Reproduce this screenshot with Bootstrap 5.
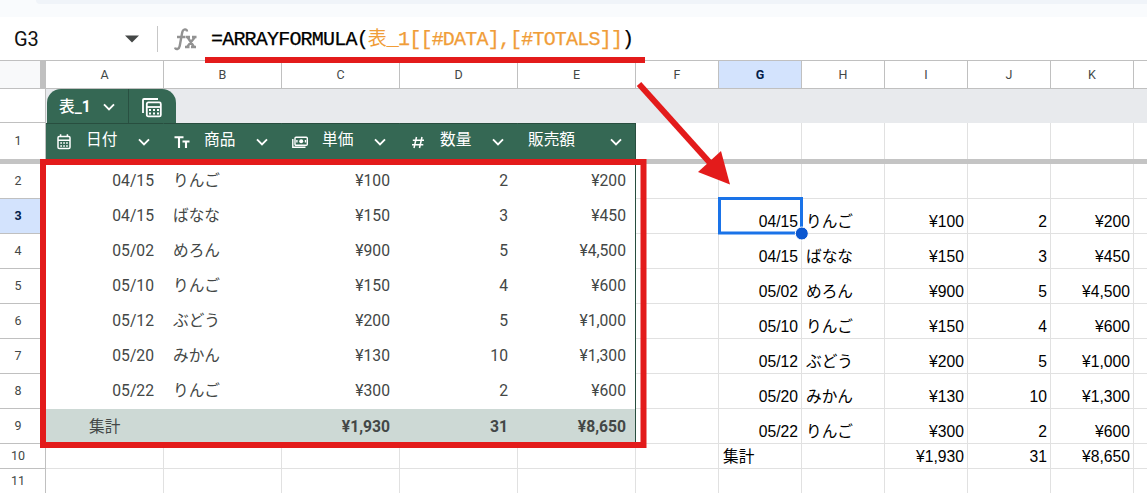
<!DOCTYPE html>
<html lang="ja">
<head>
<meta charset="utf-8">
<meta name="viewport" content="width=device-width, initial-scale=1">
<title>G3 - 表_1</title>
<link href="https://cdn.jsdelivr.net/npm/bootstrap@5.3.0/dist/css/bootstrap.min.css" rel="stylesheet">
<style>
body{font-family:Roboto,"Noto Sans CJK JP",sans-serif;font-size:15.7px;color:#434746;width:1147px;height:493px;background:#fff;line-height:20px}
svg{display:block;flex:none}
.topstrip{height:17px;background:#f9fbfd}
.toolpill{height:4px;margin-left:36px;background:#f0f4f9;border-bottom-left-radius:5px}
.fbar{height:44px;border-bottom:1px solid #c0c0c0;background:#fff}
.namebox{width:158px;height:26px;padding-left:14px;padding-right:18px;border-right:1px solid #c7c7c7;font-size:20px;color:#111}
.formula{width:936px;font-family:"Liberation Mono","Noto Sans CJK JP",monospace;font-size:20px;letter-spacing:-.8px;color:#000;white-space:pre;line-height:26px;padding-top:2px;-webkit-text-stroke:.25px}
.formula .rng{color:#f09d38}
.formula .kanji{font-size:19px;letter-spacing:0;-webkit-text-stroke:0}
.gridrow{display:flex;width:1147px}
.gc{flex:none;width:83px;height:100%;border-right:1px solid #e1e1e1;border-bottom:1px solid #e1e1e1;display:flex;white-space:nowrap}
.gc.wide{width:118px}
.gc.rest{width:13px;border-right:0}
.rh{flex:none;width:46px;padding-right:9px;font-size:12.5px;display:flex;align-items:center;justify-content:center;border-right:1px solid #c0c0c0;border-bottom:1px solid #c0c0c0}
.colhead{height:28px;font-size:12.5px}
.colhead .gc{border-color:#c0c0c0;align-items:center;justify-content:center}
.colhead .rh{background:#f8f9fa;border-right:6px solid #c0c0c0}
.picked{background:#d3e3fd!important;color:#041e49;font-weight:700}
.band{height:34px;background:#e8eaed}
.band .rh{background:#fff}
.tabchip{width:129px;height:34px;background:#356854;border-radius:14px 14px 0 0;color:#fff;margin-left:1px;font-weight:500}
.tabchip .nm{width:82px;border-right:1px solid #285041;padding:2px 13px 0 12px}
.frow{height:36px}
.frow .gc,.frow .rh{border-bottom:0}
.frow .th{background:#356854;border-color:#356854;border-top:1px solid #284e3f;color:#fff;padding:0 13px 1px 10px;align-items:center}
.th span{position:relative;top:-1px}
.th svg{margin-top:1px}
.th.last{border-right-color:#284e3f!important}
.freeze{height:5px;background:#c4c4c4}
.r35{height:35px}.r25{height:25px}
.tb{border-color:#fff;border-bottom:0;align-items:center;padding:0 9px 2px 9px}
.tb.last{border-right-color:#284e3f}
.total .tb{background:#cdd9d5;border-right-color:#cdd9d5;font-weight:700;padding-bottom:0}
.total .tb.last{border-right-color:#284e3f}
.num{justify-content:flex-end}
.out{font-family:"Liberation Sans","Noto Sans CJK JP",sans-serif;color:#000;align-items:flex-end;padding:0 3px 1px 4px}
.overlay{position:absolute;pointer-events:none}
</style>
</head>
<body class="position-relative overflow-hidden">
<div class="topstrip"><div class="toolpill"></div></div>
<div class="fbar d-flex align-items-center">
  <div class="namebox d-flex align-items-center justify-content-between"><span>G3</span><svg width="14" height="8" viewBox="0 0 14 8"><path d="M0 0.500h14L7 7.500z" fill="#444746"/></svg></div>
  <svg class="ms-3" width="24" height="26" viewBox="0 0 24 26" fill="none" stroke="#929292" stroke-width="2.400"><path d="M13 5.500c0-3-4-3-4.800 1L5.700 20c-.6 3.500-4 4-4.700 1.500M3 11h8.500M12 11h4M18 11h4.500M11 21h4.500M17 21h5M13.500 11l6.500 10M21 11l-8 10"/></svg>
  <div class="formula ms-auto">=ARRAYFORMULA(<span class="rng"><span class="kanji">表</span>_1[[#DATA],[#TOTALS]]</span>)</div>
</div>
<main id="sheet"></main>

<svg class="overlay" style="left:0;top:0" width="1147" height="493" viewBox="0 0 1147 493">
  <rect x="719.500" y="198.500" width="82" height="34.500" fill="none" stroke="#1a73e8" stroke-width="3"/>
  <circle cx="801.800" cy="233.500" r="6.500" fill="#0b57d0" stroke="#fff"/>
  <path d="M205 60H645" stroke="#e31b1b" stroke-width="6"/>
  <rect x="43" y="162" width="600.500" height="283" fill="none" stroke="#e31b1b" stroke-width="6"/>
  <path d="M639 84L711 164" stroke="#e31b1b" stroke-width="6"/>
  <path d="M721 151L730 184.500L698 172z" fill="#e31b1b"/>
</svg>

<script>
const icons = {
  cal:'<svg width="16" height="16" viewBox="0 0 16 16" fill="none" stroke="#fff" stroke-width="1.500"><rect x="2" y="2.500" width="12" height="12" rx="1.300"/><path d="M2 6.200h12M4.600 .3v2.500M11.400 .3v2.500"/><path d="M4.300 9h1.700M7.200 9h1.700M10.100 9h1.700M4.300 12h1.700M7.200 12h1.700M10.100 12h1.700"/></svg>',
  text:'<svg width="16" height="16" viewBox="0 0 16 16" fill="none" stroke="#fff" stroke-width="2.100"><path d="M.5 3.200h9M5 3.200V14M8.500 7.500H15.500M12 7.500V14"/></svg>',
  money:'<svg width="16" height="16" viewBox="0 0 16 16" fill="none" stroke="#fff" stroke-width="1.400"><rect x="3" y="3.200" width="12.300" height="8" rx="1"/><circle cx="9.200" cy="7.200" r="2" fill="#fff" stroke="none"/><path d="M.8 5v8.300H13.500M4.900 6v2.500M13.500 6v2.500"/></svg>',
  hash:'<svg width="16" height="16" viewBox="0 0 16 16" fill="none" stroke="#fff" stroke-width="1.500"><path d="M6.500 3L4 14M12 3L9.500 14M2.800 6.200H14M2 10.700h11.300"/></svg>'
};
const chev = '<svg class="ms-auto" width="12" height="8" viewBox="0 0 12 8" fill="none" stroke="#fff" stroke-width="1.900"><path d="M1 1.300l5 5 5-5"/></svg>';
const calc = '<svg width="20" height="20" viewBox="0 0 20 20" fill="none" stroke="#fff" stroke-width="1.800"><path d="M1 15V2Q1 1 2 1H16"/><rect x="4.800" y="4.400" width="14" height="14" rx="1.500"/><path d="M5 9h14"/><path d="M7 12h2M11 12h2M15 12h2M7 15.500h2M11 15.500h2M15 15.500h2" stroke-width="2"/></svg>';
const data = [
  ['04/15','りんご','¥100','2','¥200'],['04/15','ばなな','¥150','3','¥450'],
  ['05/02','めろん','¥900','5','¥4,500'],['05/10','りんご','¥150','4','¥600'],
  ['05/12','ぶどう','¥200','5','¥1,000'],['05/20','みかん','¥130','10','¥1,300'],
  ['05/22','りんご','¥300','2','¥600']];
const total = ['集計','','¥1,930','31','¥8,650'];
const rh = (n, c='') => `<div class="rh ${c}">${n}</div>`;
const blank = (n, c='') => `<div class="gc ${c}"></div>`.repeat(n);
const rest = blank(1,'rest');
const table = (r, sum) => r.map((v,i)=>`<div class="gc wide tb ${i==4?'last':''} ${i!=1&&!(sum&&i==0)?'num':''}"><span ${sum&&i==0?'class="fw-normal" style="margin-left:34px"':''}>${v}</span></div>`).join('');
const out = (r, sum) => r.map((v,i)=>`<div class="gc out ${i!=1&&!(sum&&i==0)?'num':''}">${v}</div>`).join('');
let h = '<div class="gridrow colhead">' + rh('') +
  [...'ABCDEFGHIJK'].map((c,i)=>`<div class="gc ${i<5?'wide':''} ${c=='G'?'picked':''}">${c}</div>`).join('') + rest + '</div>';
h += '<div class="gridrow band">' + rh('') + `<div class="tabchip d-flex align-items-center"><div class="nm h-100 d-flex align-items-center"><span>表_<b>1</b></span>${chev}</div><div style="margin:3px 0 0 13px">${calc}</div></div></div>`;
h += '<div class="gridrow frow">' + rh('1') +
  [['cal','日付'],['text','商品'],['money','単価'],['hash','数量'],['','販売額']].map(([k,t],i)=>`<div class="gc wide th ${i==4?'last':''}">${k?icons[k]:''}<span style="margin-left:${k?14:0}px">${t}</span>${chev}</div>`).join('') + blank(6) + rest + '</div><div class="freeze"></div>';
for (let n=2;n<=9;n++) {
  h += `<div class="gridrow r35 ${n==9?'total':''}">` + rh(n, n==3?'picked':'') + table(n==9?total:data[n-2], n==9) + blank(1) +
    (n==2 ? blank(5) : out(data[n-3])) + rest + '</div>';
}
h += '<div class="gridrow r25">' + rh('10') + blank(5,'wide') + blank(1) + out(total,true) + rest + '</div>';
h += '<div class="gridrow r25">' + rh('11') + blank(5,'wide') + blank(6) + rest + '</div>';
document.getElementById('sheet').innerHTML = h;
</script>
<script src="https://cdn.jsdelivr.net/npm/bootstrap@5.3.0/dist/js/bootstrap.bundle.min.js"></script>
</body>
</html>
